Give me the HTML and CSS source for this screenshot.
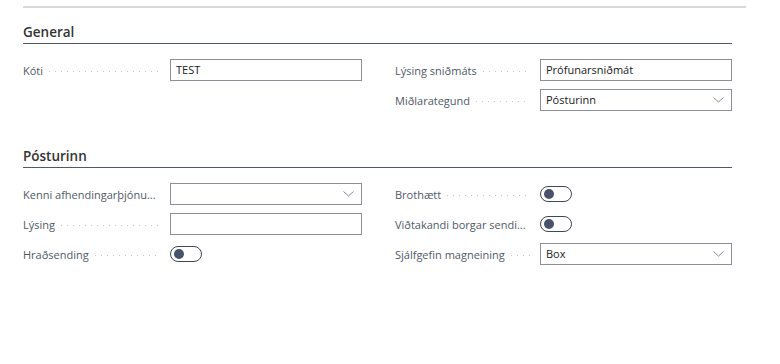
FILE: index.html
```html
<!DOCTYPE html>
<html lang="is">

<head>
    <meta charset="UTF-8">
    <meta name="viewport" content="width=device-width, initial-scale=1.0">
    <title>Pósturinn</title>
    <link rel="stylesheet" href="styles.css">
</head>

<body>
    <div class="page">
        <div class="top-rule"></div>

        <!-- General -->
        <section class="group">
            <h2 class="group-title">General</h2>
            <div class="fields">
                <div class="column">
                    <div class="field">
                        <label class="caption"><span class="caption-text">Kóti</span><span class="leader"></span></label>
                        <div class="input">TEST</div>
                    </div>
                </div>
                <div class="column">
                    <div class="field">
                        <label class="caption"><span class="caption-text">Lýsing sniðmáts</span><span class="leader"></span></label>
                        <div class="input">Prófunarsniðmát</div>
                    </div>
                    <div class="field">
                        <label class="caption"><span class="caption-text">Miðlarategund</span><span class="leader"></span></label>
                        <div class="input select">Pósturinn
                            <svg class="chevron" width="11" height="6" viewBox="0 0 11 6"><polyline points="0.5,0.5 5.5,5 10.5,0.5" fill="none" stroke="#7a7c80" stroke-width="0.9"/></svg>
                        </div>
                    </div>
                </div>
            </div>
        </section>

        <!-- Pósturinn -->
        <section class="group">
            <h2 class="group-title">Pósturinn</h2>
            <div class="fields">
                <div class="column">
                    <div class="field">
                        <label class="caption"><span class="caption-text">Kenni afhendingarþjónu...</span></label>
                        <div class="input select">
                            <svg class="chevron" width="11" height="6" viewBox="0 0 11 6"><polyline points="0.5,0.5 5.5,5 10.5,0.5" fill="none" stroke="#7a7c80" stroke-width="0.9"/></svg>
                        </div>
                    </div>
                    <div class="field">
                        <label class="caption"><span class="caption-text">Lýsing</span><span class="leader"></span></label>
                        <div class="input"></div>
                    </div>
                    <div class="field">
                        <label class="caption"><span class="caption-text">Hraðsending</span><span class="leader"></span></label>
                        <div class="toggle"><span class="knob"></span></div>
                    </div>
                </div>
                <div class="column">
                    <div class="field">
                        <label class="caption"><span class="caption-text">Brothætt</span><span class="leader"></span></label>
                        <div class="toggle"><span class="knob"></span></div>
                    </div>
                    <div class="field">
                        <label class="caption"><span class="caption-text">Viðtakandi borgar sendi...</span><span class="leader"></span></label>
                        <div class="toggle"><span class="knob"></span></div>
                    </div>
                    <div class="field">
                        <label class="caption"><span class="caption-text">Sjálfgefin magneining</span><span class="leader"></span></label>
                        <div class="input select">Box
                            <svg class="chevron" width="11" height="6" viewBox="0 0 11 6"><polyline points="0.5,0.5 5.5,5 10.5,0.5" fill="none" stroke="#7a7c80" stroke-width="0.9"/></svg>
                        </div>
                    </div>
                </div>
            </div>
        </section>
    </div>
</body>

</html>
```

FILE: styles.css
```css
body {
    margin: 0;
    background-color: #ffffff;
    font-family: 'Open Sans', 'Noto Sans', sans-serif;
    color: #212121;
}

.page {
    padding: 6px 0 0 23px;
    width: 709px;
}

.top-rule {
    height: 2px;
    width: 723px;
    background-color: #d6d9dc;
}

.group {
    margin-top: 14px;
}

.group + .group {
    margin-top: 35px;
}

.group-title {
    margin: 0;
    font-size: 13.5px;
    font-weight: 600;
    line-height: 21px;
    color: #333333;
    border-bottom: 1px solid #505a66;
}

.fields {
    display: grid;
    grid-template-columns: 339px 337px;
    column-gap: 33px;
    margin-top: 15px;
}

.column {
    display: flex;
    flex-direction: column;
    gap: 8px;
}

.field {
    display: flex;
    align-items: center;
    height: 22px;
}

.caption {
    display: flex;
    align-items: center;
    width: 137px;
    margin-right: 10px;
    font-size: 11px;
    color: #505a66;
    white-space: nowrap;
}

.column + .column .caption {
    width: 135px;
}

.caption-text {
    flex: 0 0 auto;
}

.leader {
    flex: 1 0 0;
    height: 1px;
    margin: 3px 0 0 6px;
    background-image: repeating-linear-gradient(to right, #c4c8cc 0 1px, transparent 1px 6px);
}

.input {
    position: relative;
    box-sizing: border-box;
    width: 192px;
    height: 22px;
    border: 1px solid #8a8f98;
    padding: 0 5px;
    font-size: 11px;
    line-height: 20px;
    color: #212121;
}

.select .chevron {
    position: absolute;
    right: 7px;
    top: 7px;
}

.toggle {
    box-sizing: border-box;
    width: 32px;
    height: 16px;
    border: 1px solid #3f4756;
    border-radius: 8px;
    display: flex;
    align-items: center;
    padding-left: 3px;
}

.knob {
    width: 10px;
    height: 10px;
    border-radius: 50%;
    background-color: #48526a;
}
```
